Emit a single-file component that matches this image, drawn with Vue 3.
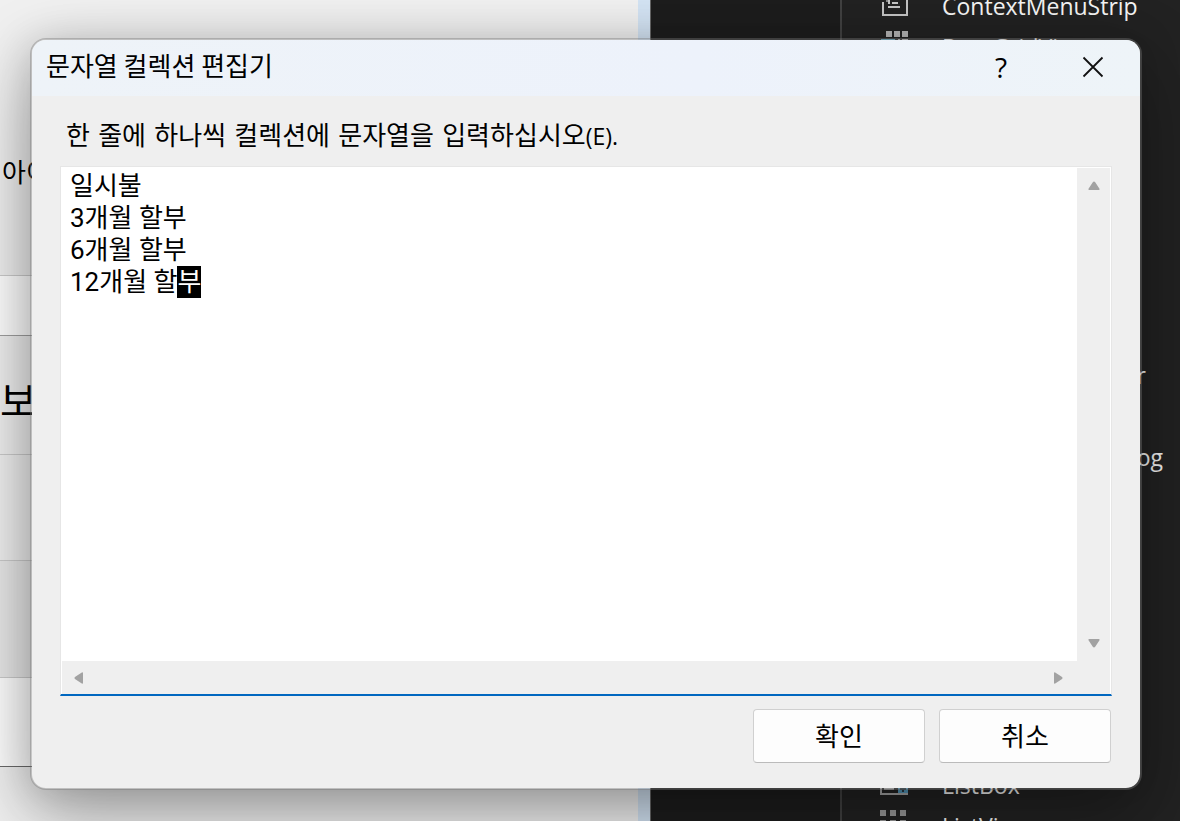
<script setup>
import { onMounted, ref } from 'vue'

const text = ref('일시불\n3개월 할부\n6개월 할부\n12개월 할부')
const editor = ref(null)

const tools = [
  { name: 'ContextMenuStrip', slot: 'row-1', icon: 'menu' },
  { name: 'DataGridView', slot: 'row-2', icon: 'grid' },
  { name: 'FileSystemWatcher', slot: 'row-10', icon: '' },
  { name: 'FolderBrowserDialog', slot: 'row-12', icon: '' },
  { name: 'ListBox', slot: 'row-20', icon: 'list' },
  { name: 'ListView', slot: 'row-21', icon: 'view' }
]

onMounted(() => {
  const el = editor.value
  el.focus({ preventScroll: true })
  el.setSelectionRange(text.value.length - 1, text.value.length)
})
</script>

<template>
  <div class="screen">
    <div class="workspace">
      <section class="form-page">
        <div class="band band-top"><span class="field-name">아이</span></div>
        <div class="band band-input"></div>
        <div class="band band-head"><span class="heading">보</span></div>
        <div class="band band-row"></div>
        <div class="band band-gray"></div>
        <div class="band band-white"></div>
        <div class="band band-rest"></div>
      </section>
      <div class="edge"></div>
      <div class="canvas"></div>
      <ul class="toolbox">
        <li v-for="tool in tools" :key="tool.name" :class="['tool', tool.slot]">
          <svg v-if="tool.icon === 'menu'" class="tool-icon" width="30" height="29" viewBox="0 0 30 29" aria-hidden="true">
            <path d="M3 11V24H27V0" fill="none" stroke="#c4c4c4" stroke-width="2" />
            <path d="M12 11h6v2h-6zM8 15h12v2H8zM8 9h2v4H8z" fill="#c4c4c4" />
            <path d="M6 9h2v2H6z" fill="#888" />
          </svg>
          <svg v-else-if="tool.icon === 'grid'" class="tool-icon" width="30" height="29" viewBox="0 0 30 29" aria-hidden="true">
            <path d="M6-1h6v6H6zM14-1h6v6h-6zM22-1h6v6h-6zM18 7h2v6h-2zM22 7h6v6h-6z" fill="#b4b4b4" />
            <path d="M1 7h14v6H1z" fill="#5da3bd" />
          </svg>
          <svg v-else-if="tool.icon === 'list'" class="tool-icon" width="30" height="29" viewBox="0 0 30 29" aria-hidden="true">
            <path d="M1 2V24H28M4 19H14" fill="none" stroke="#a8a8a8" stroke-width="2" />
            <path d="M18 11h10v12H18z" fill="#5598ba" />
            <path d="M20 18h6v2h-6zM22 16h2v6h-2z" fill="#2a3b44" />
          </svg>
          <svg v-else-if="tool.icon === 'view'" class="tool-icon" width="30" height="29" viewBox="0 0 30 29" aria-hidden="true">
            <path d="M0-1h6v6H0zM10-1h6v6h-6zM20-1h6v6h-6zM0 9h6v6H0zM10 9h6v6h-6zM20 9h6v6h-6z" fill="#999" />
          </svg>
          <span class="tool-name">{{ tool.name }}</span>
        </li>
      </ul>
    </div>

    <div class="dialog" role="dialog" aria-labelledby="dialog-title">
      <header class="titlebar">
        <h1 id="dialog-title">문자열 컬렉션 편집기</h1>
        <button class="caption help" type="button">?</button>
        <button class="caption" type="button" aria-label="닫기">
          <svg width="22" height="22" viewBox="0 0 22 22" aria-hidden="true">
            <path d="M1.500 1.500l19 19M20.500 1.500l-19 19" fill="none" stroke="#111" stroke-width="1.800" />
          </svg>
        </button>
      </header>
      <form class="body" @submit.prevent>
        <label class="prompt" for="items">한 줄에 하나씩 컬렉션에 문자열을 입력하십시오<span class="key">(E).</span></label>
        <div class="editor">
          <textarea id="items" ref="editor" v-model="text" wrap="off" spellcheck="false"></textarea>
          <div class="bar vertical">
            <button type="button" aria-label="위로">
              <svg width="12" height="10" viewBox="0 0 12 10"><path d="M6 .5q.7 0 1.200.8l4.300 6.500q.5 1.200-.8 1.200H1.300Q0 9 .5 7.800l4.300-6.500Q5.300.5 6 .5z" fill="#a2a2a2" /></svg>
            </button>
            <button type="button" aria-label="아래로">
              <svg width="12" height="10" viewBox="0 0 12 10"><path d="M6 9.500q.7 0 1.200-.8l4.300-6.500Q12 1 10.700 1H1.300Q0 1 .5 2.200l4.300 6.500q.5.8 1.200.8z" fill="#a2a2a2" /></svg>
            </button>
          </div>
          <div class="bar horizontal">
            <button type="button" aria-label="왼쪽으로">
              <svg width="10" height="12" viewBox="0 0 10 12"><path d="M.5 6q0-.7.8-1.200L7.800.5Q9 0 9 1.300v9.400q0 1.300-1.200.8L1.300 7.200Q.5 6.700.5 6z" fill="#a2a2a2" /></svg>
            </button>
            <button type="button" aria-label="오른쪽으로">
              <svg width="10" height="12" viewBox="0 0 10 12"><path d="M9.500 6q0-.7-.8-1.200L2.200.5Q1 0 1 1.300v9.400q0 1.300 1.200.8l6.500-4.300q.8-.5.8-1.200z" fill="#a2a2a2" /></svg>
            </button>
          </div>
        </div>
        <div class="actions">
          <button class="action" type="submit">확인</button>
          <button class="action" type="button">취소</button>
        </div>
      </form>
    </div>
  </div>
</template>

<style>
body {
  margin: 0;
}
</style>

<style scoped>
.screen {
  position: relative;
  height: 100vh;
  overflow: hidden;
  font-family: 'Noto Sans CJK KR', sans-serif;
  color: #000;
}

.screen * {
  box-sizing: border-box;
}

.workspace {
  display: flex;
  height: 100%;
  overflow: hidden;
}

.form-page {
  display: flex;
  flex: 1;
  flex-direction: column;
  overflow: hidden;
  background: #f0f0f0;
}

.band {
  display: flex;
  flex: none;
  border-bottom: 1px solid #ccc;
}

.band-top {
  height: 276px;
  padding: 155px 0 0 2px;
}

.field-name {
  font-size: 26px;
  line-height: 32px;
}

.band-input {
  height: 60px;
  background: #fff;
  border-color: #a0a0a0;
}

.band-head {
  height: 119px;
  padding-top: 33px;
}

.heading {
  font-size: 40px;
  line-height: 60px;
}

.band-row {
  height: 106px;
}

.band-gray {
  height: 117px;
  background: #e9e9e9;
}

.band-white {
  height: 89px;
  background: #fff;
  border-color: #6a6a6a;
}

.band-rest {
  flex: 1;
  border: 0;
}

.edge {
  width: 13px;
  background: #d3e3f3;
  border-right: 1px solid #666;
}

.canvas {
  width: 189px;
  background: #1d1d1d;
}

.toolbox {
  display: grid;
  grid-auto-rows: 41px;
  width: 340px;
  margin: 0;
  padding: 0;
  list-style: none;
  color: #f4f4f4;
  background: #222;
  border-left: 2px solid #414141;
  font-family: 'Open Sans', sans-serif;
  font-size: 23px;
}

.tool {
  display: flex;
  align-items: center;
  height: 41px;
  padding-left: 38px;
  margin-top: -15px;
}

.tool-icon {
  flex: none;
  overflow: visible;
}

.tool-name {
  padding-left: 32px;
}

.row-1 { grid-row: 1; }
.row-2 { grid-row: 2; }
.row-10 { grid-row: 10; justify-content: flex-end; padding-right: 34px; }
.row-12 { grid-row: 12; justify-content: flex-end; padding-right: 17px; }
.row-20 { grid-row: 20; }
.row-21 { grid-row: 21; }

.dialog {
  position: absolute;
  inset: 38px 38px 31px 30px;
  display: flex;
  flex-direction: column;
  overflow: hidden;
  background: #efefef;
  background-clip: padding-box;
  border: 2px solid rgba(118, 118, 118, 0.4);
  border-radius: 16px;
  box-shadow: 0 28px 76px rgba(0, 0, 0, 0.32), 0 4px 40px rgba(0, 0, 0, 0.16);
}

.titlebar {
  display: flex;
  flex: none;
  align-items: center;
  height: 56px;
  padding: 0 1px 2px 14px;
  background: linear-gradient(90deg, #eef3f8, #edf2fb 60%, #eef4f8);
}

h1 {
  flex: 1;
  margin: 0;
  padding-bottom: 4px;
  font-size: 26px;
  font-weight: 400;
  line-height: 32px;
}

button {
  display: flex;
  align-items: center;
  justify-content: center;
  margin: 0;
  padding: 0;
  color: #000;
  background: none;
  border: 0;
  font: inherit;
}

.caption {
  width: 92px;
  height: 54px;
}

.help {
  font-family: 'Open Sans', sans-serif;
  font-size: 28px;
  line-height: 32px;
}

.body {
  display: flex;
  flex: 1;
  flex-direction: column;
  min-height: 0;
  padding: 24px 28px 25px;
}

.prompt {
  height: 46px;
  padding-left: 6px;
  font-family: 'DejaVu Sans', 'Noto Sans CJK KR', sans-serif;
  font-size: 26px;
  line-height: 32px;
  white-space: nowrap;
}

.key {
  font-family: 'Open Sans', sans-serif;
  font-size: 23px;
}

.editor {
  display: grid;
  flex: 1;
  grid-template-rows: 1fr 33px;
  grid-template-columns: 1fr 33px;
  min-height: 0;
  padding: 1px 1px 0;
  background: #fff;
  border: 1px solid #e6e6e6;
  border-bottom: 2px solid #0067c0;
}

textarea {
  width: 100%;
  height: 100%;
  margin: 0;
  padding: 2px 8px;
  overflow: hidden;
  color: #000;
  background: #fff;
  border: 0;
  outline: 0;
  resize: none;
  caret-color: transparent;
  font-family: Roboto, 'Noto Sans CJK KR', sans-serif;
  font-size: 26px;
  line-height: 32px;
}

textarea::selection {
  color: #fff;
  background: #000;
}

.bar {
  display: flex;
  justify-content: space-between;
  background: #efefef;
}

.bar button {
  width: 33px;
  height: 36px;
}

.vertical {
  flex-direction: column;
}

.horizontal {
  grid-column: 1 / 3;
  padding-right: 36px;
}

.horizontal button {
  height: 33px;
}

.actions {
  display: flex;
  flex: none;
  gap: 14px;
  justify-content: flex-end;
  padding: 13px 1px 0 0;
}

.action {
  width: 172px;
  height: 54px;
  padding-bottom: 2px;
  background: #fdfdfd;
  border: 1px solid #d0d0d0;
  border-bottom-color: #bbb;
  border-radius: 4px;
  font-size: 26px;
  line-height: 32px;
}
</style>
